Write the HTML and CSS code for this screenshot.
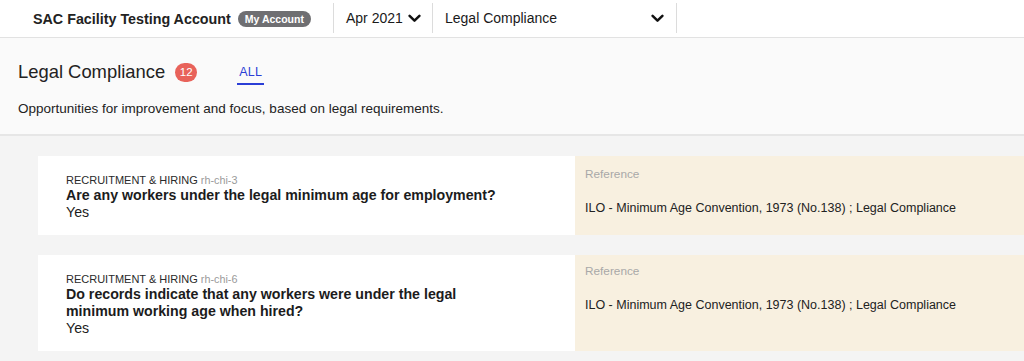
FILE: index.html
```html
<!DOCTYPE html>
<html>
<head>
<meta charset="utf-8">
<link rel="stylesheet" href="styles.css">
</head>
<body>
<header class="topbar">
  <div class="account">
    <span class="account-name">SAC Facility Testing Account</span>
    <span class="pill">My Account</span>
  </div>
  <div class="dropdown date">
    <span>Apr 2021</span>
    <svg class="chev" viewBox="0 0 13 9" width="13" height="9"><path d="M1.6 1.8 L6.5 6.6 L11.4 1.8" fill="none" stroke="#111" stroke-width="2.5" stroke-linecap="round" stroke-linejoin="round"/></svg>
  </div>
  <div class="dropdown topic">
    <span>Legal Compliance</span>
    <svg class="chev" viewBox="0 0 13 9" width="13" height="9"><path d="M1.6 1.8 L6.5 6.6 L11.4 1.8" fill="none" stroke="#111" stroke-width="2.5" stroke-linecap="round" stroke-linejoin="round"/></svg>
  </div>
</header>
<section class="intro">
  <div class="intro-head">
    <h1 class="intro-title">Legal Compliance</h1>
    <span class="count">12</span>
    <span class="tab">ALL</span>
  </div>
  <p class="intro-desc">Opportunities for improvement and focus, based on legal requirements.</p>
</section>
<main class="list">
  <article class="card">
    <div class="card-main">
      <div class="cat">RECRUITMENT &amp; HIRING <span class="code">rh-chi-3</span></div>
      <div class="question">Are any workers under the legal minimum age for employment?</div>
      <div class="answer">Yes</div>
    </div>
    <div class="card-ref">
      <div class="ref-label">Reference</div>
      <div class="ref-text">ILO - Minimum Age Convention, 1973 (No.138) ; Legal Compliance</div>
    </div>
  </article>
  <article class="card">
    <div class="card-main">
      <div class="cat">RECRUITMENT &amp; HIRING <span class="code">rh-chi-6</span></div>
      <div class="question">Do records indicate that any workers were under the legal minimum working age when hired?</div>
      <div class="answer">Yes</div>
    </div>
    <div class="card-ref second">
      <div class="ref-label">Reference</div>
      <div class="ref-text">ILO - Minimum Age Convention, 1973 (No.138) ; Legal Compliance</div>
    </div>
  </article>
</main>
</body>
</html>
```
FILE: styles.css
```css
* { box-sizing: border-box; }
html, body { margin: 0; padding: 0; }
body {
  font-family: "Liberation Sans", Arial, Helvetica, sans-serif;
  color: #1f1f1f;
  background: #f4f4f4;
  width: 1024px;
  height: 361px;
  overflow: hidden;
}
.topbar {
  display: flex;
  height: 38px;
  background: #fff;
  border-bottom: 1px solid #e2e2e2;
  align-items: stretch;
}
.account {
  display: flex;
  align-items: center;
  width: 333px;
  padding-left: 33px;
  gap: 7px;
}
.account-name {
  font-weight: bold;
  font-size: 14.3px;
  color: #222;
}
.pill {
  background: #6f6f72;
  color: #fff;
  font-weight: bold;
  font-size: 10.5px;
  border-radius: 8px;
  padding: 2px 7px;
  line-height: 12px;
}
.dropdown {
  display: flex;
  align-items: center;
  font-size: 14px;
  color: #1a1a1a;
  border-left: 1px solid #dcdcdc;
  margin: 3px 0 4px;
  padding-left: 12px;
}
.dropdown.date { width: 99px; gap: 5px; }
.dropdown.topic {
  width: 245px;
  justify-content: space-between;
  padding-right: 12px;
  border-right: 1px solid #dcdcdc;
}
.chev { display: block; }
.intro {
  background: #fafafa;
  border-bottom: 2px solid #e6e6e6;
  padding: 22px 18px 19px;
  height: 98px;
}
.intro-head {
  display: flex;
  align-items: center;
  height: 24px;
}
.intro-title {
  margin: 0;
  font-weight: normal;
  font-size: 18.4px;
  color: #222;
}
.count {
  margin-left: 10px;
  background: #e8625a;
  color: #fff;
  font-size: 11.5px;
  width: 22px;
  height: 19px;
  border-radius: 10px;
  display: flex;
  align-items: center;
  justify-content: center;
}
.tab {
  margin-left: 40px;
  color: #2b3ed6;
  font-size: 12.5px;
  line-height: 14px;
  padding: 6px 2px 4px;
  border-bottom: 2px solid #2b3ed6;
  letter-spacing: 0.2px;
}
.intro-desc {
  margin: 17px 0 0;
  font-size: 13.5px;
  color: #222;
}
.list {
  padding: 20px 0 0 38px;
  display: flex;
  flex-direction: column;
  gap: 20px;
}
.card {
  display: flex;
  background: #fff;
}
.card-main {
  width: 537px;
  padding: 17px 60px 15px 28px;
}
.cat {
  font-size: 11px;
  color: #2a2a2a;
  line-height: 14px;
}
.code { color: #9a9a9a; font-size: 10.8px; }
.question {
  font-weight: bold;
  font-size: 14.2px;
  line-height: 17px;
  color: #1c1c1c;
}
.answer {
  font-size: 14.2px;
  line-height: 16px;
  color: #1c1c1c;
}
.card-ref {
  flex: 1;
  background: #f8f0e0;
  padding: 11px 10px;
}
.card-ref.second { padding-top: 9px; }
.ref-label {
  font-size: 11.8px;
  color: #a8a8a8;
  line-height: 14px;
}
.ref-text {
  margin-top: 20px;
  font-size: 12.5px;
  color: #222;
}
```
